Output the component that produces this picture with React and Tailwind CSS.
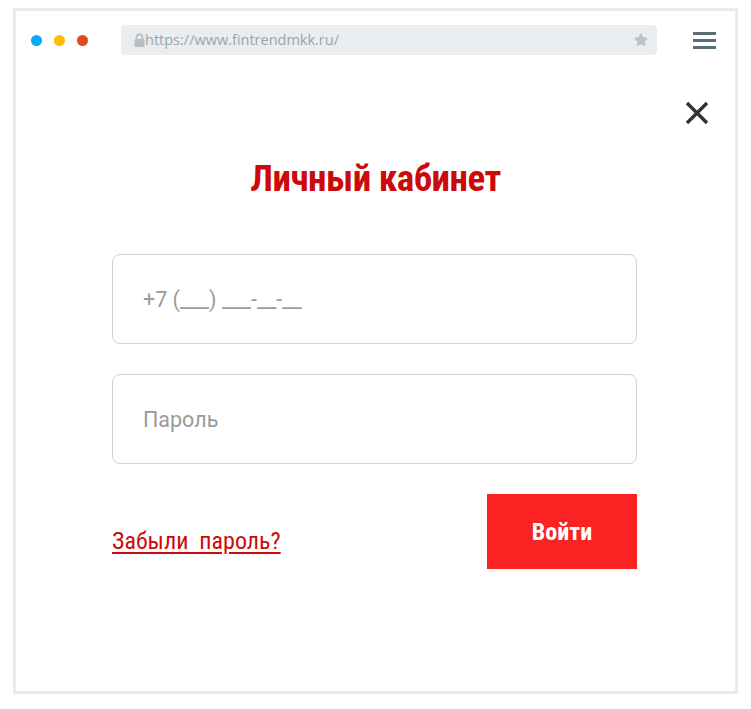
import { Star } from "lucide-react";

const Dot = ({ color }) => <span className={`block size-[11px] rounded-full ${color}`} />;

const LockIcon = () => (
  <svg width="11" height="14" viewBox="0 0 11 14" className="shrink-0">
    <path d="M2.6 6.5 V4.3 a2.9 2.9 0 0 1 5.8 0 V6.5" fill="none" stroke="#b4bfc6" strokeWidth="1.8" />
    <rect x="0.5" y="6" width="10" height="8" rx="1" fill="#b4bfc6" />
  </svg>
);

const BrowserBar = () => (
  <div className="mt-[14px] flex h-[30px] items-center pl-[15px] pr-[19px]">
    <div className="flex items-center gap-[12px]">
      <Dot color="bg-[#00aaff]" />
      <Dot color="bg-[#ffbb00]" />
      <Dot color="bg-[#e4491b]" />
    </div>
    <div className="ml-[33px] flex h-[30px] w-[536px] items-center rounded-[4px] bg-[#e9edf0] pl-[13px] pr-[9px]">
      <LockIcon />
      <span className="font-['Open_Sans',sans-serif] text-[14.5px] text-[#98a6ae]">https://www.fintrendmkk.ru/</span>
      <Star className="ml-auto size-[14px] text-[#b8c4cc]" fill="#b8c4cc" />
    </div>
    <div className="ml-auto flex w-[23px] flex-col gap-[4px]">
      <span className="block h-[3px] bg-[#5a6e78]" />
      <span className="block h-[3px] bg-[#5a6e78]" />
      <span className="block h-[3px] bg-[#5a6e78]" />
    </div>
  </div>
);

const Field = ({ placeholder, type = "text" }) => (
  <input
    type={type}
    placeholder={placeholder}
    className="h-[90px] w-[525px] rounded-[8px] border border-[#d2d2d2] bg-white px-[30px] text-[21.5px] text-[#333] outline-none placeholder:text-[#9a9a9a]"
  />
);

export default function App() {
  return (
    <div className="min-h-[709px] bg-white pl-[13px] pt-[8px] font-['Roboto',sans-serif]">
      <div className="flex h-[686px] w-[725px] flex-col border-[3px] border-[#e9ecef] bg-white">
        <BrowserBar />

        <div className="mt-[46px] flex justify-end pr-[26px]">
          <button className="text-[#333]">
            <svg width="24" height="24" viewBox="0 0 24 24">
              <path d="M2 2 L22 22 M22 2 L2 22" stroke="#333" strokeWidth="3.4" />
            </svg>
          </button>
        </div>

        <h1 className="mt-[34px] text-center text-[37px] font-bold leading-[40px] tracking-[-0.5px] text-[#cc0a0a] [font-stretch:condensed]">
          Личный кабинет
        </h1>

        <form className="ml-[96px] mt-[55px] flex w-[525px] flex-col gap-[30px]">
          <Field placeholder="+7 (___) ___-__-__" type="tel" />
          <Field placeholder="Пароль" type="password" />

          <div className="flex items-end justify-between">
            <a href="#" className="mb-[14px] text-[24px] leading-[28px] text-[#cc0a0a] underline underline-offset-[3px] [font-stretch:condensed]">
              Забыли&nbsp; пароль?
            </a>
            <button type="button" className="h-[75px] w-[150px] bg-[#fa2222] text-[24px] font-bold text-white [font-stretch:condensed]">
              Войти
            </button>
          </div>
        </form>
      </div>
    </div>
  );
}
